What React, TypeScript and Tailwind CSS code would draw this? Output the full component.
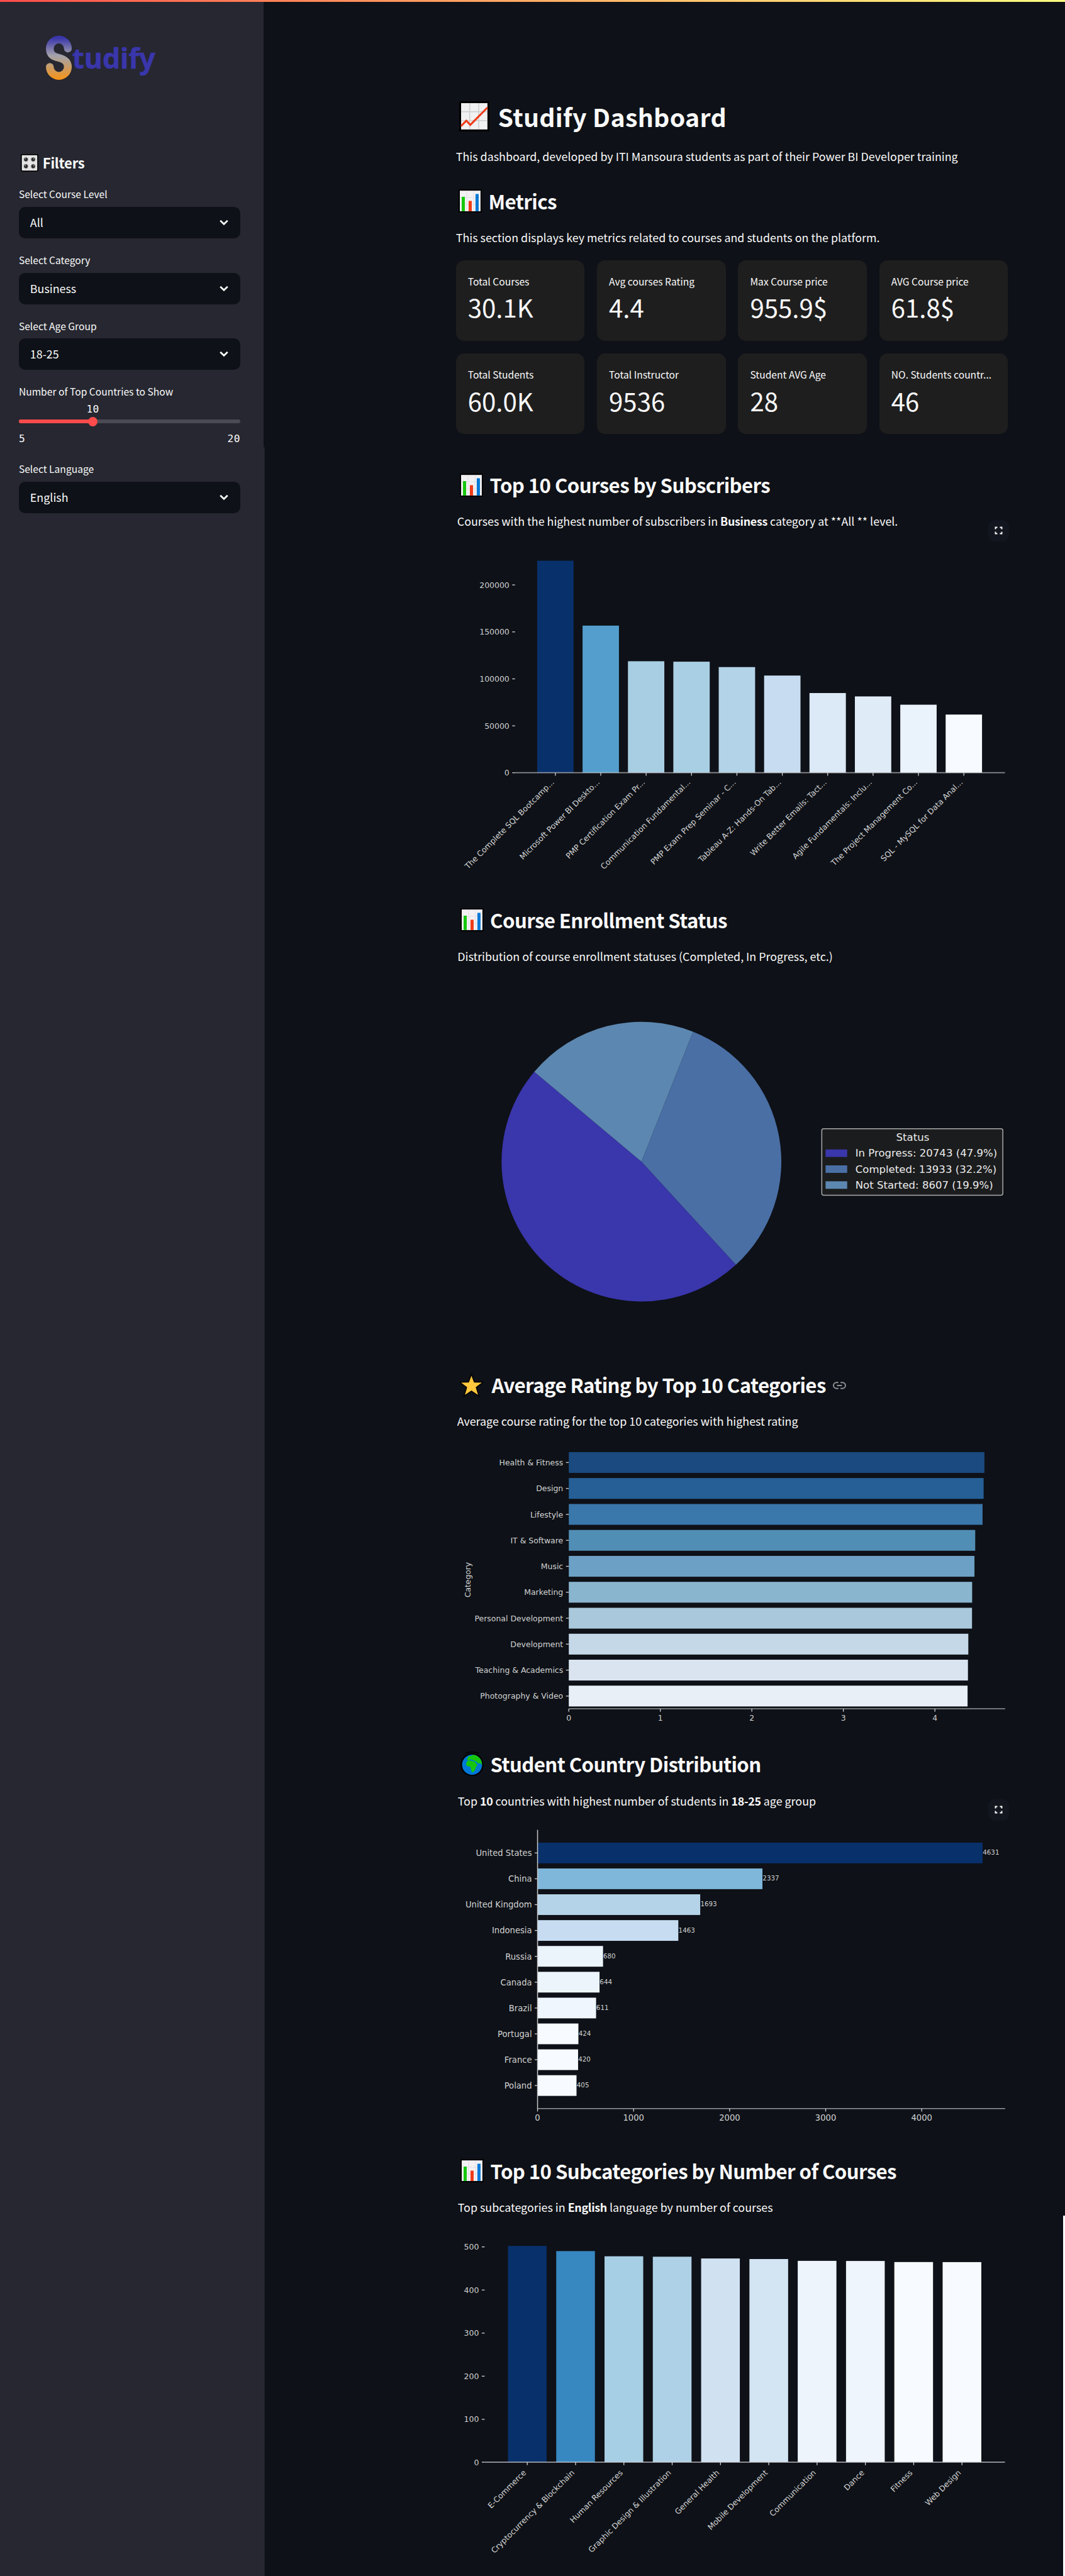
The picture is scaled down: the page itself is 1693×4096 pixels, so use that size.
import React from "react";

type Bar = { label: string; end: number; color: string; value?: string };

/* ---------- icons ---------- */

function TrendIcon() {
  return (
    <svg className="h-[48px] w-[48px] shrink-0" viewBox="0 0 48 48">
      <rect width="48" height="48" fill="#000" />
      <rect x="3" y="3" width="42" height="42" fill="#f1f1f1" />
      <path d="M16.7 3v42M31 3v42M3 16.7h42M3 30.8h42" stroke="#cfcfcf" strokeWidth="1.6" fill="none" />
      <path d="M3 39.5L11.3 31L17.7 37.7L45 10" stroke="#f03a17" strokeWidth="3" fill="none" />
    </svg>
  );
}

function BarsIcon() {
  return (
    <svg className="h-[37px] w-[37px] shrink-0" viewBox="0 0 37 37">
      <rect width="37" height="37" fill="#000" />
      <rect x="2" y="2" width="33" height="33" fill="#f3f1f4" />
      <path d="M13 2v33M24 2v33M2 13h33M2 24h33" stroke="#e2e0e3" strokeWidth="1" fill="none" />
      <path d="M2.5 2.5h32" stroke="#c9c7ca" strokeWidth="1" />
      <rect x="5" y="12" width="5" height="23" fill="#16c60c" />
      <rect x="16" y="18.500" width="5" height="16.500" fill="#f03a17" />
      <rect x="27" y="7.500" width="5" height="27.500" fill="#0078d7" />
    </svg>
  );
}

function StarIcon() {
  return (
    <svg className="mr-[3px] h-[40px] w-[37px] shrink-0" viewBox="0 0 37 40">
      <path
        d="M18.500 5.500L22.600 16.200L35 16.500L25.300 23.800L29 36L18.500 29L8 36L11.700 23.800L2 16.500L14.400 16.200Z"
        fill="#ffc83d"
        stroke="#000"
        strokeWidth="3"
        paintOrder="stroke"
      />
    </svg>
  );
}

function GlobeIcon() {
  return (
    <svg className="h-[40px] w-[37px] shrink-0" viewBox="0 0 37 40">
      <path d="M8 2.300Q18 -1 29 2.300" stroke="#000" strokeWidth="1.300" fill="none" />
      <circle cx="18.500" cy="21" r="18.300" fill="#000" />
      <circle cx="18.500" cy="21" r="16" fill="#0078d7" />
      <path
        d="M11 11L13.500 7.500L18 6.500L20 5.200Q27 5.500 31.500 11.500Q34.600 16 34.300 21L31.500 18.500L28 19L25.500 16L23 15L19.500 13.500L16 12.500L13 14.500L10.500 13.500Z"
        fill="#16c60c"
      />
      <path
        d="M10.500 15.500L14.500 14.200L19 15.200L23 16L25 19.500L27.300 21.500L24.800 24.500L23.500 28.500L21 32.500L18.300 33L16.800 28.500L15.800 24.200L11.500 23.500L8.500 21Z"
        fill="#16c60c"
      />
      <path d="M26.500 27.500l1.200-1.800v3zM12 9.500l1.500-2 .5 2.500z" fill="#16c60c" />
    </svg>
  );
}

function KnobsIcon() {
  const knobs = [
    [8.200, 8.500],
    [19.800, 8.500],
    [8.200, 19.500],
    [19.800, 19.500],
  ];
  return (
    <svg className="h-[28px] w-[28px] shrink-0" viewBox="0 0 28 28">
      <rect width="28" height="28" rx="2.500" fill="#000" />
      <rect x="1.700" y="1.700" width="24.600" height="24.600" rx="1" fill="#e6e6e6" />
      {knobs.map(([x, y], i) => (
        <g key={i}>
          <circle cx={x} cy={y} r="4.200" fill="none" stroke="#8a8a8a" strokeWidth="1" strokeDasharray="0.8 2.5" />
          <circle cx={x} cy={y} r="3.100" fill="#2b2b2b" />
          <circle cx={x + (i % 2 ? 0.8 : -0.8)} cy={y - 1} r="0.800" fill="#ddd" />
          <circle cx={x + 3.200} cy={y + 3.200} r="0.600" fill="#f0a090" />
        </g>
      ))}
    </svg>
  );
}

function LinkIcon() {
  return (
    <svg className="ml-[11px] mt-[2px] h-[12px] w-[21px] shrink-0" viewBox="0 0 21 12" fill="none" stroke="#8f9194" strokeWidth="2">
      <path d="M8.800 1.200H5.800a4.800 4.800 0 0 0 0 9.600H8.800M12.200 1.200H15.200a4.800 4.800 0 0 1 0 9.600H12.200M6.500 6H14.500" />
    </svg>
  );
}

function FullscreenButton() {
  return (
    <button className="absolute right-[-1.700px] top-[77.700px] flex h-[34px] w-[33px] items-center justify-center rounded-[10px] bg-[#12161f]">
      <svg className="h-[13px] w-[13px]" viewBox="0 0 13 13" fill="none" stroke="#fafafa" strokeWidth="2">
        <path d="M1.500 4.500V1.500H4.500M8.500 1.500H11.500V4.500M11.500 8.500V11.500H8.500M4.500 11.500H1.500V8.500" />
      </svg>
    </button>
  );
}

/* ---------- sidebar ---------- */

function Logo() {
  return (
    <svg className="ml-[43px] h-[80px] w-[180px] overflow-visible" viewBox="73 53 180 80">
      <defs>
        <linearGradient id="s" gradientUnits="userSpaceOnUse" x1="0" y1="57" x2="0" y2="127">
          <stop offset="0.050" stopColor="#3a36ab" />
          <stop offset="0.450" stopColor="#a3a2ab" />
          <stop offset="0.550" stopColor="#b0a193" />
          <stop offset="1" stopColor="#f89416" />
        </linearGradient>
      </defs>
      <path
        d="M108 77.300A14.400 14.400 0 0 0 79.200 77.300C79.200 88 86 90 93.600 92C101 94 108 97 108 106.500A14.400 14.400 0 0 1 79.200 106.500"
        fill="none"
        stroke="url(#s)"
        strokeWidth="12.400"
        strokeLinecap="round"
      />
      <text x="114.500" y="108.700" fontFamily="Noto Sans" fontWeight="700" fontSize="45" textLength="133" fill="#3a36ab" stroke="#3a36ab" strokeWidth="0.500">
        tudify
      </text>
    </svg>
  );
}

function FieldLabel({ children }: { children: React.ReactNode }) {
  return <div className="h-[30px] text-[15.670px] leading-[19px]">{children}</div>;
}

function Select({ label, value }: { label: string; value: string }) {
  return (
    <div className="flex h-[105px] flex-col">
      <FieldLabel>{label}</FieldLabel>
      <div className="flex h-[50px] items-center justify-between rounded-[10px] bg-[#0e1117] pl-[18px] pr-[19px] text-[17.920px]">
        <span className="leading-[30px]">{value}</span>
        <svg className="h-[10px] w-[14px]" viewBox="0 0 14 10" fill="none" stroke="#fafafa" strokeWidth="2.700">
          <path d="M1.200 1.700L7 7.300L12.800 1.700" />
        </svg>
      </div>
    </div>
  );
}

function Sidebar() {
  return (
    <aside className="flex w-[422.300px] shrink-0 flex-col">
      <div className="flex h-[713px] w-[420px] flex-col bg-[#262730] pl-[30px] pr-[37px] pt-[53px]">
        <Logo />
        <div className="mt-[108px] flex h-[38px] items-center pl-[3px]">
          <KnobsIcon />
          <h3 className="ml-[7px] text-[22.200px] font-bold leading-[38px] tracking-[-0.300px]">Filters</h3>
        </div>
        <div className="mt-[21px]">
          <Select label="Select Course Level" value="All" />
          <Select label="Select Category" value="Business" />
          <Select label="Select Age Group" value="18-25" />
        </div>
        <FieldLabel>Number of Top Countries to Show</FieldLabel>
        <div className="flex flex-col font-[DejaVu_Sans_Mono,monospace] text-[16.300px] tracking-[0.400px]">
          <div className="mt-[-4px] w-[236px] text-center leading-[24px]">10</div>
          <div className="relative mt-[4px] flex h-[6px] overflow-visible rounded-full bg-[#4a4b55]">
            <div className="w-[118px] rounded-l-full bg-[#ff4b4b]" />
            <div className="absolute left-[110px] top-[-4.500px] h-[15px] w-[15px] rounded-full bg-[#ff4b4b]" />
          </div>
          <div className="mt-[13px] flex justify-between leading-[24px]">
            <span>5</span>
            <span>20</span>
          </div>
        </div>
      </div>
      <div className="flex flex-1 flex-col border-r border-[#1e1f28] bg-[#262730] pl-[30px] pr-[38.300px] pt-[25px]">
        <Select label="Select Language" value="English" />
      </div>
    </aside>
  );
}

/* ---------- main column ---------- */

function SectionTitle({ icon, children, link }: { icon: React.ReactNode; children: React.ReactNode; link?: boolean }) {
  return (
    <div className="flex h-[44px] items-center pl-[4.500px]">
      {icon}
      <h2 className="ml-[10.500px] whitespace-nowrap text-[31.300px] font-bold leading-[44px] tracking-[-0.600px]">{children}</h2>
      {link && <LinkIcon />}
    </div>
  );
}

function Metric({ label, value }: { label: string; value: string }) {
  return (
    <div className="flex flex-col rounded-[13px] bg-[#1e1e1e] pl-[19px] pr-[18px] pt-[22px]">
      <div className="whitespace-nowrap text-[15.670px] leading-[24px]">{label}</div>
      <div className="mt-[1px] text-[40.300px] leading-[56px]">{value}</div>
    </div>
  );
}

const metrics = [
  ["Total Courses", "30.1K"],
  ["Avg courses Rating", "4.4"],
  ["Max Course price", "955.9$"],
  ["AVG Course price", "61.8$"],
  ["Total Students", "60.0K"],
  ["Total Instructor", "9536"],
  ["Student AVG Age", "28"],
  ["NO. Students countr...", "46"],
];

/* ---------- charts ---------- */

const chartFont = "DejaVu Sans, sans-serif";
const ink = "#d2d3d4";

const courses: Bar[] = [
  { label: "The Complete SQL Bootcamp...", end: 892.900, color: "#08306b" },
  { label: "Microsoft Power BI Deskto...", end: 996.400, color: "#539ecd" },
  { label: "PMP Certification Exam Pr...", end: 1053.200, color: "#a8cee4" },
  { label: "Communication Fundamental...", end: 1053.900, color: "#a9cfe5" },
  { label: "PMP Exam Prep Seminar - C...", end: 1062.500, color: "#b3d3e8" },
  { label: "Tableau A-Z: Hands-On Tab...", end: 1076, color: "#c7dcf0" },
  { label: "Write Better Emails: Tact...", end: 1103.900, color: "#dce9f6" },
  { label: "Agile Fundamentals: Inclu...", end: 1109.300, color: "#dfebf7" },
  { label: "The Project Management Co...", end: 1122.500, color: "#eaf2fb" },
  { label: "SQL - MySQL for Data Anal...", end: 1138.200, color: "#f7fbff" },
];

const subcategories: Bar[] = [
  { label: "E-Commerce", end: 3580.400, color: "#08306b" },
  { label: "Cryptocurrency & Blockchain", end: 3588.700, color: "#3787c0" },
  { label: "Human Resources", end: 3597, color: "#a6cee4" },
  { label: "Graphic Design & Illustration", end: 3597.700, color: "#afd1e7" },
  { label: "General Health", end: 3600.500, color: "#d0e1f2" },
  { label: "Mobile Development", end: 3601.400, color: "#d3e4f3" },
  { label: "Communication", end: 3604.300, color: "#edf4fc" },
  { label: "Dance", end: 3604.500, color: "#eef5fc" },
  { label: "Fitness", end: 3606.200, color: "#f7fbff" },
  { label: "Web Design", end: 3606.300, color: "#f7fbff" },
];

const ratings: Bar[] = [
  { label: "Health & Fitness", end: 1568.300, color: "#1a4a7f" },
  { label: "Design", end: 1567, color: "#255f96" },
  { label: "Lifestyle", end: 1565.300, color: "#3a77aa" },
  { label: "IT & Software", end: 1553.600, color: "#518eb5" },
  { label: "Music", end: 1552.400, color: "#6ca0c4" },
  { label: "Marketing", end: 1548.700, color: "#8ab5cf" },
  { label: "Personal Development", end: 1548.500, color: "#a9c8db" },
  { label: "Development", end: 1542.600, color: "#c5d8e8" },
  { label: "Teaching & Academics", end: 1542, color: "#d9e4f0" },
  { label: "Photography & Video", end: 1541.400, color: "#e8eff7" },
];

const countries: Bar[] = [
  { label: "United States", value: "4631", end: 1565.300, color: "#08306b" },
  { label: "China", value: "2337", end: 1214.400, color: "#7fb7da" },
  { label: "United Kingdom", value: "1693", end: 1115.200, color: "#b4d3e9" },
  { label: "Indonesia", value: "1463", end: 1080.300, color: "#c7dcf0" },
  { label: "Russia", value: "680", end: 960.300, color: "#ebf3fb" },
  { label: "Canada", value: "644", end: 954.700, color: "#edf5fc" },
  { label: "Brazil", value: "611", end: 949.200, color: "#eff6fd" },
  { label: "Portugal", value: "424", end: 921, color: "#f7fbff" },
  { label: "France", value: "420", end: 920.500, color: "#f7fbff" },
  { label: "Poland", value: "405", end: 918, color: "#f7fbff" },
];

type ColumnProps = {
  bars: Bar[];
  ticks: [string, number][];
  first: number;
  pitch: number;
  width: number;
  base: number;
  left: number;
  font: number;
  labelY: number;
};

function Columns({ bars, ticks, first, pitch, width, base, left, font, labelY }: ColumnProps) {
  return (
    <g fontFamily={chartFont} fontSize={font} fill={ink}>
      {ticks.map(([t, y]) => (
        <g key={t}>
          <text x={left - 9} y={y + font * 0.370} textAnchor="end">{t}</text>
          <path d={`M${left - 4.500} ${y}H${left}`} stroke={ink} strokeWidth="1.300" />
        </g>
      ))}
      {bars.map((b, i) => (
        <rect key={i} x={first + i * pitch - width / 2} y={b.end} width={width} height={base - b.end} fill={b.color} />
      ))}
      <path d={`M${left} ${base}H1601`} stroke="#d0d1d3" strokeOpacity="0.650" strokeWidth="1.800" />
      {bars.map((b, i) => (
        <g key={i}>
          <path d={`M${first + i * pitch} ${base}v4.700`} stroke={ink} strokeWidth="1.300" />
          <text textAnchor="end" transform={`translate(${first + i * pitch - 1} ${labelY}) rotate(-45)`}>{b.label}</text>
        </g>
      ))}
    </g>
  );
}

type RowProps = {
  bars: Bar[];
  ticks: string[];
  first: number;
  pitch: number;
  height: number;
  axisX: number;
  axisY: number;
  step: number;
  font: number;
};

function Rows({ bars, ticks, first, pitch, height, axisX, axisY, step, font }: RowProps) {
  return (
    <g fontFamily={chartFont} fontSize={font} fill={ink}>
      {bars.map((b, i) => {
        const y = first + i * pitch;
        return (
          <g key={b.label}>
            <text x={axisX - 9} y={y + font * 0.370} textAnchor="end">{b.label}</text>
            <path d={`M${axisX - 4.500} ${y}H${axisX}`} stroke={ink} strokeWidth="1.300" />
            <rect x={axisX} y={y - height / 2} width={b.end - axisX} height={height} fill={b.color} />
            {b.value && <text x={b.end + 0.300} y={y + 3} fontSize="10.350">{b.value}</text>}
          </g>
        );
      })}
      <path d={`M${axisX} ${axisY}H1601.300`} stroke="#96989b" strokeWidth="1.600" />
      {ticks.map((t, i) => (
        <g key={t}>
          <path d={`M${axisX + i * step} ${axisY}v4.700`} stroke={ink} strokeWidth="1.300" />
          <text x={axisX + i * step} y={axisY + 19} textAnchor="middle">{t}</text>
        </g>
      ))}
    </g>
  );
}

const slices = [
  { from: 140, to: 312.500, color: "#3a36ab", text: "In Progress: 20743 (47.9%)" },
  { from: 312.500, to: 428.350, color: "#4a6fa5", text: "Completed: 13933 (32.2%)" },
  { from: 68.350, to: 140, color: "#5c87b0", text: "Not Started: 8607 (19.9%)" },
];

function Pie() {
  const cx = 1021.500;
  const cy = 1851.500;
  const r = 223;
  const pt = (a: number) => `${cx + r * Math.cos((a * Math.PI) / 180)} ${cy - r * Math.sin((a * Math.PI) / 180)}`;
  return (
    <g fontFamily={chartFont} fontSize="16.600" fill="#ececed">
      {slices.map((s) => (
        <path key={s.text} d={`M${cx} ${cy}L${pt(s.from)}A${r} ${r} 0 0 0 ${pt(s.to)}Z`} fill={s.color} />
      ))}
      <rect x="1309" y="1799" width="288.600" height="106" rx="3" fill="#1b1c1d" stroke="#a9aaab" strokeWidth="1.500" />
      <text x="1454" y="1818.500" textAnchor="middle">Status</text>
      {slices.map((s, i) => (
        <g key={s.text}>
          <rect x="1315" y={1832 + i * 25.400} width="34.500" height="12" fill={s.color} />
          <text x="1362.500" y={1843.700 + i * 25.400}>{s.text}</text>
        </g>
      ))}
    </g>
  );
}

/* ---------- page ---------- */

export default function App() {
  return (
    <div className="h-[4096px] w-[1693px] overflow-hidden bg-[#0e1117]">
      <div className="relative flex h-[4108px] w-[1698px] bg-[#0e1117] font-['Noto_Sans_CJK_SC','Open_Sans',sans-serif] text-[#fafafa] [zoom:0.9972]">
        <div className="absolute left-0 top-0 h-[3px] w-full bg-linear-to-r from-[#ff4b4b] to-[#fffd80]" />
        <Sidebar />
        <main className="ml-[304.500px] flex w-[880px] flex-col pt-[155.900px] text-[17.920px] leading-[30px]">
          <header className="h-[595.400px]">
            <div className="flex h-[60px] items-center pl-[5px]">
              <TrendIcon />
              <h1 className="ml-[14px] text-[39.400px] font-bold leading-[60px] tracking-[0.300px]">Studify Dashboard</h1>
            </div>
            <p className="mt-[18.400px]">
              This dashboard, developed by ITI Mansoura students as part of their Power BI Developer training
            </p>
            <div className="mt-[34.500px]">
              <SectionTitle icon={<BarsIcon />}>Metrics</SectionTitle>
            </div>
            <p className="mt-[20.800px]">This section displays key metrics related to courses and students on the platform.</p>
            <div className="mt-[21.200px] grid grid-cols-4 grid-rows-[129px_128px] gap-[20px]">
              {metrics.map(([l, v]) => (
                <Metric key={l} label={l} value={v} />
              ))}
            </div>
          </header>

          <section className="relative h-[693.750px] pl-[2px]">
            <SectionTitle icon={<BarsIcon />}>Top 10 Courses by Subscribers</SectionTitle>
            <p className="mt-[20.850px]">
              Courses with the highest number of subscribers in <b className="tracking-[-0.300px]">Business</b> category at **All ** level.
            </p>
            <FullscreenButton />
            <svg className="ml-[-1.200px] h-[598.900px] w-[880px] overflow-visible" viewBox="727 845.200 880 598.900">
              <Columns
                bars={courses}
                ticks={[["200000", 931.500], ["150000", 1006.400], ["100000", 1081.300], ["50000", 1156.200], ["0", 1231]]}
                first={884.300}
                pitch={72.350}
                width={58}
                base={1231}
                left={820}
                font={12.500}
                labelY={1247}
              />
            </svg>
          </section>

          <section className="h-[740.700px] pl-[2.500px]">
            <SectionTitle icon={<BarsIcon />}>Course Enrollment Status</SectionTitle>
            <p className="mt-[21.350px]">Distribution of course enrollment statuses (Completed, In Progress, etc.)</p>
            <svg className="ml-[-1.700px] h-[645.300px] w-[880px] overflow-visible" viewBox="727 1539.500 880 645.300">
              <Pie />
            </svg>
          </section>

          <section className="h-[605.500px] pl-[2px]">
            <SectionTitle icon={<StarIcon />} link>Average Rating by Top 10 Categories</SectionTitle>
            <p className="mt-[22.050px]">Average course rating for the top 10 categories with highest rating</p>
            <svg className="ml-[-1.200px] h-[509.400px] w-[880px] overflow-visible" viewBox="727 2280.900 880 509.400">
              <Rows
                bars={ratings}
                ticks={["0", "1", "2", "3", "4"]}
                first={2331.500}
                pitch={41.380}
                height={33.200}
                axisX={905.700}
                axisY={2724.200}
                step={145.900}
                font={12.500}
              />
              <text
                transform="translate(749 2518.600) rotate(-90)"
                textAnchor="middle"
                fontFamily={chartFont}
                fontSize="12.300"
                fill={ink}
              >
                Category
              </text>
            </svg>
          </section>

          <section className="relative h-[648.300px] pl-[3px]">
            <SectionTitle icon={<GlobeIcon />}>Student Country Distribution</SectionTitle>
            <p className="mt-[21.550px]">
              Top <b className="tracking-[-0.300px]">10</b> countries with highest number of students in{" "}
              <b className="tracking-[-0.300px]">18-25</b> age group
            </p>
            <FullscreenButton />
            <svg className="ml-[-2.200px] h-[552.700px] w-[880px] overflow-visible" viewBox="727 2885.900 880 552.700">
              <Rows
                bars={countries}
                ticks={["0", "1000", "2000", "3000", "4000"]}
                first={2953.400}
                pitch={41.210}
                height={33}
                axisX={855.900}
                axisY={3361}
                step={153.100}
                font={13.200}
              />
              <path d="M855.900 2916.600V3361.800" stroke="#c6c7c9" strokeWidth="1.500" />
            </svg>
          </section>

          <section className="h-[668.400px] pl-[3px]">
            <SectionTitle icon={<BarsIcon />}>Top 10 Subcategories by Number of Courses</SectionTitle>
            <p className="mt-[21.550px]">
              Top subcategories in <b className="tracking-[-0.300px]">English</b> language by number of courses
            </p>
            <svg className="ml-[-2.200px] h-[572.800px] w-[880px] overflow-visible" viewBox="727 3534.200 880 572.800">
              <Columns
                bars={subcategories}
                ticks={[["500", 3582], ["400", 3650.800], ["300", 3719.500], ["200", 3788.200], ["100", 3857], ["0", 3925.300]]}
                first={839.500}
                pitch={77}
                width={61.700}
                base={3925.300}
                left={771.500}
                font={12.500}
                labelY={3943}
              />
            </svg>
          </section>
        </main>
        <div className="absolute bottom-0 right-0 h-[575px] w-[3px] bg-white" />
      </div>
    </div>
  );
}
